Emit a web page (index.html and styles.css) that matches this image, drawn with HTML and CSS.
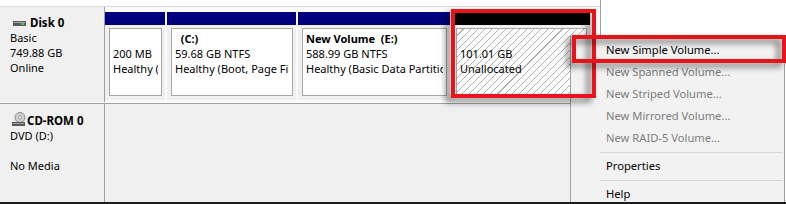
FILE: index.html
```html
<!DOCTYPE html>
<html>
<head>
<meta charset="utf-8">
<link rel="stylesheet" href="styles.css">
</head>
<body>
<div class="window">
  <div class="screen">
    <div class="panel">
      <div class="top-gap"></div>
      <div class="row row-disk">
        <div class="label">
          <div class="title">
            <svg class="ico-disk" width="13" height="5" viewBox="0 0 13 5">
              <rect x="0" y="0" width="13" height="5" fill="#5c5c5c"/>
              <rect x="1" y="1" width="11" height="1" fill="#a8a8a8"/>
              <rect x="8" y="2" width="3" height="2" fill="#3fc43f"/>
            </svg>
            <b>Disk 0</b>
          </div>
          <div>Basic</div>
          <div>749.88 GB</div>
          <div>Online</div>
        </div>
        <div class="parts">
          <div class="part p1">
            <div class="bar"></div>
            <div class="body"><div class="box">
              <div class="ln">&nbsp;</div>
              <div class="ln">200 MB</div>
              <div class="ln">Healthy (EFI System Partition)</div>
            </div></div>
          </div>
          <div class="part p2">
            <div class="bar"></div>
            <div class="body"><div class="box">
              <div class="ln"><b>&nbsp;&nbsp;(C:)</b></div>
              <div class="ln">59.68 GB NTFS</div>
              <div class="ln">Healthy (Boot, Page File, Crash Dump, Primary Partition)</div>
            </div></div>
          </div>
          <div class="part p3">
            <div class="bar"></div>
            <div class="body"><div class="box">
              <div class="ln"><b>New Volume&nbsp;&nbsp;(E:)</b></div>
              <div class="ln">588.99 GB NTFS</div>
              <div class="ln">Healthy (Basic Data Partition)</div>
            </div></div>
          </div>
          <div class="part p4">
            <div class="bar bar-free"></div>
            <div class="body"><div class="box box-free">
              <div class="ln">&nbsp;</div>
              <div class="ln">101.01 GB</div>
              <div class="ln">Unallocated</div>
            </div></div>
          </div>
        </div>
      </div>
      <div class="row-sep"></div>
      <div class="row row-cd">
        <div class="label">
          <div class="title">
            <svg class="ico-cd" width="14" height="15" viewBox="0 0 14 15">
              <circle cx="8" cy="5.5" r="5" fill="#cfcfcf" stroke="#8c8c8c" stroke-width="1"/>
              <circle cx="8" cy="5.5" r="1.6" fill="#f4f4f4" stroke="#8c8c8c" stroke-width="0.8"/>
              <rect x="0" y="10" width="13" height="4" fill="#5a5a5a"/>
              <rect x="1" y="11" width="11" height="1" fill="#9c9c9c"/>
            </svg>
            <b>CD-ROM 0</b>
          </div>
          <div>DVD (D:)</div>
          <div>&nbsp;</div>
          <div>No Media</div>
        </div>
        <div class="empty"></div>
      </div>
    </div>

    <div class="menu">
      <div class="item">New Simple Volume...</div>
      <div class="item off">New Spanned Volume...</div>
      <div class="item off">New Striped Volume...</div>
      <div class="item off">New Mirrored Volume...</div>
      <div class="item off">New RAID-5 Volume...</div>
      <div class="sep"></div>
      <div class="item">Properties</div>
      <div class="sep"></div>
      <div class="item">Help</div>
    </div>

    <div class="mark mark-a"></div>
    <div class="mark mark-b"></div>
  </div>
</div>
</body>
</html>
```

FILE: styles.css
```css
* { box-sizing: border-box; }
html, body { margin: 0; padding: 0; background: #fff; }
body {
  width: 786px;
  height: 204px;
  overflow: hidden;
  font-family: "Noto Sans", "Open Sans", sans-serif;
  font-size: 11px;
  color: #000;
}
b { font-weight: 700; }

.window { border-bottom: 2px solid #1c1c1c; }
.screen { position: relative; height: 202px; overflow: hidden; }

.panel {
  width: 601px;
  height: 202px;
  border-right: 1px solid #a0a0a0;
  display: flex;
  flex-direction: column;
}
.top-gap { height: 7px; background: #fff; border-bottom: 1px solid #d9d9d9; flex: none; }

.row { display: flex; flex: none; }
.row-disk { height: 95px; }
.row-sep { height: 2px; flex: none; border-top: 1px solid #fff; border-bottom: 1px solid #a0a0a0; }
.row-cd { flex: 1; }

.label {
  width: 105px;
  flex: none;
  border-right: 1px solid #a0a0a0;
  background: #f0f0f0;
  padding: 8px 0 0 10px;
  line-height: 15px;
  white-space: nowrap;
}
.row-cd .label { padding-top: 9px; }
.title { display: flex; align-items: center; height: 15px; font-size: 11.5px; }
.ico-disk { margin: 1px 4px 0 3px; flex: none; }
.ico-cd { margin: -2px 1px 0 2px; flex: none; }

.parts {
  flex: 1;
  display: flex;
  gap: 2px;
  padding: 5px 0 2px 0;
  background: #fafafa;
}
.part { display: flex; flex-direction: column; flex: none; }
.p1 { width: 60px; }
.p2 { width: 129px; }
.p3 { width: 152px; }
.p4 { width: 138px; }
.bar { height: 13px; background: #00007f; flex: none; }
.bar-free { background: #000; }
.body { flex: 1; padding: 3px 3px 4px 4px; background: #f0f0f0; }
.box {
  height: 100%;
  border: 1px solid #a6a6a6;
  background: #fff;
  padding: 2px 3px 0;
  overflow: hidden;
  white-space: nowrap;
  line-height: 15px;
}
.ln { height: 15px; overflow: hidden; }
.box-free {
  background-color: #fff;
  background-image: repeating-linear-gradient(135deg, #fff 0 4.2px, #b0b0b0 4.2px 5px);
}

.empty { flex: 1; background: #f0f0f0; }

.menu {
  position: absolute;
  left: 570px;
  top: 36px;
  width: 215px;
  height: 180px;
  background: #f2f2f2;
  border: 1px solid #a0a0a0;
  padding: 2px;
}
.item {
  height: 22px;
  line-height: 22px;
  padding-left: 33px;
  white-space: nowrap;
  color: #000;
  font-size: 11.2px;
}
.item.off { color: #7d7d7d; }
.sep {
  height: 6px;
  margin-left: 27px;
  display: flex;
  align-items: center;
}
.sep::before { content: ""; flex: 1; height: 1px; background: #d5d5d5; }

.mark {
  position: absolute;
  border: 4px solid #e8141c;
  filter: drop-shadow(-5px 4px 3px rgba(0, 0, 0, 0.55));
}
.mark-a { left: 451px; top: 9px; width: 145px; height: 89px; }
.mark-b { left: 572px; top: 35px; width: 214px; height: 28px; }
```
